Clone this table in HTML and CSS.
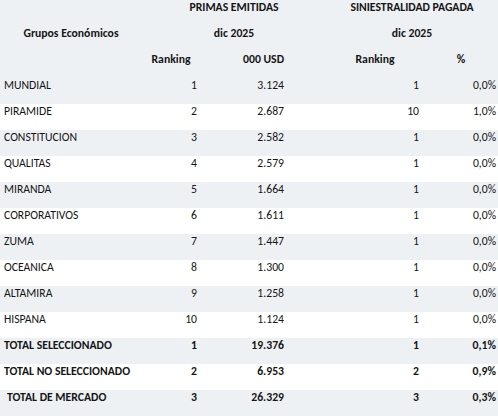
FILE: index.html
```html
<!DOCTYPE html>
<html lang="es">
<head>
<meta charset="UTF-8">
<title>Ranking Grupos Económicos</title>
<link rel="stylesheet" href="styles.css">
</head>
<body>

<table class="ranking">
  <colgroup>
    <col class="c-name">
    <col class="c-rank">
    <col class="c-usd">
    <col class="c-gap">
    <col class="c-rank2">
    <col class="c-pct">
  </colgroup>
  <thead>
    <tr>
      <th></th>
      <th colspan="3" class="center">PRIMAS EMITIDAS</th>
      <th colspan="2" class="center">SINIESTRALIDAD PAGADA</th>
    </tr>
    <tr>
      <th class="center">Grupos Económicos</th>
      <th colspan="3" class="center">dic 2025</th>
      <th colspan="2" class="center">dic 2025</th>
    </tr>
    <tr>
      <th></th>
      <th class="center">Ranking</th>
      <th class="num">000 USD</th>
      <th></th>
      <th class="center">Ranking</th>
      <th class="center">%</th>
    </tr>
  </thead>
  <tbody>
    <tr><td class="name">MUNDIAL</td><td class="num">1</td><td class="num usd">3.124</td><td></td><td class="num r2">1</td><td class="num pct">0,0%</td></tr>
    <tr><td class="name">PIRAMIDE</td><td class="num">2</td><td class="num usd">2.687</td><td></td><td class="num r2">10</td><td class="num pct">1,0%</td></tr>
    <tr><td class="name">CONSTITUCION</td><td class="num">3</td><td class="num usd">2.582</td><td></td><td class="num r2">1</td><td class="num pct">0,0%</td></tr>
    <tr><td class="name">QUALITAS</td><td class="num">4</td><td class="num usd">2.579</td><td></td><td class="num r2">1</td><td class="num pct">0,0%</td></tr>
    <tr><td class="name">MIRANDA</td><td class="num">5</td><td class="num usd">1.664</td><td></td><td class="num r2">1</td><td class="num pct">0,0%</td></tr>
    <tr><td class="name">CORPORATIVOS</td><td class="num">6</td><td class="num usd">1.611</td><td></td><td class="num r2">1</td><td class="num pct">0,0%</td></tr>
    <tr><td class="name">ZUMA</td><td class="num">7</td><td class="num usd">1.447</td><td></td><td class="num r2">1</td><td class="num pct">0,0%</td></tr>
    <tr><td class="name">OCEANICA</td><td class="num">8</td><td class="num usd">1.300</td><td></td><td class="num r2">1</td><td class="num pct">0,0%</td></tr>
    <tr><td class="name">ALTAMIRA</td><td class="num">9</td><td class="num usd">1.258</td><td></td><td class="num r2">1</td><td class="num pct">0,0%</td></tr>
    <tr><td class="name">HISPANA</td><td class="num">10</td><td class="num usd">1.124</td><td></td><td class="num r2">1</td><td class="num pct">0,0%</td></tr>
    <tr class="total"><td class="name">TOTAL SELECCIONADO</td><td class="num">1</td><td class="num usd">19.376</td><td></td><td class="num r2">1</td><td class="num pct">0,1%</td></tr>
    <tr class="total"><td class="name">TOTAL NO SELECCIONADO</td><td class="num">2</td><td class="num usd">6.953</td><td></td><td class="num r2">2</td><td class="num pct">0,9%</td></tr>
    <tr class="total"><td class="name indent">TOTAL DE MERCADO</td><td class="num">3</td><td class="num usd">26.329</td><td></td><td class="num r2">3</td><td class="num pct">0,3%</td></tr>
  </tbody>
</table>

</body>
</html>
```

FILE: styles.css
```css
body { margin: 0; padding: 0; background-color: #fff; font-family: Carlito, Calibri, "Liberation Sans", sans-serif; font-size: 11.7px; color: #151515; }
.ranking { width: 498px; border-collapse: collapse; table-layout: fixed; }
.c-name { width: 142px; }
.c-rank { width: 58px; }
.c-usd { width: 88px; }
.c-gap { width: 38px; }
.c-rank2 { width: 98px; }
.c-pct { width: 74px; }
.ranking th, .ranking td { height: 26px; padding: 0; vertical-align: top; line-height: 14px; box-sizing: border-box; white-space: nowrap; }
.ranking th { font-weight: bold; }
thead tr { background-color: #eef1f4; }
tbody tr:nth-child(odd) { background-color: #eef1f4; }
tbody tr:nth-child(even) { background-color: #fff; }
.ranking .center { text-align: center; }
.ranking .num { text-align: right; padding-right: 3px; }
.ranking th.num, .ranking td.usd { padding-right: 4px; }
.ranking td.r2 { padding-right: 5px; }
.ranking td.pct { padding-right: 2px; }
.ranking td.name { text-align: left; padding-left: 4px; }
.ranking td.indent { padding-left: 7px; }
.total td { font-weight: bold; }
```
